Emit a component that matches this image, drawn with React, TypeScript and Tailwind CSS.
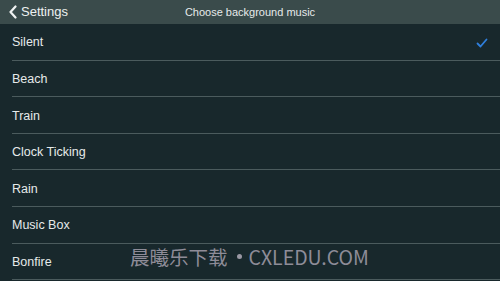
import React from "react";

const items = ["Silent", "Beach", "Train", "Clock Ticking", "Rain", "Music Box", "Bonfire"];

export default function App() {
  return (
    <div className="relative w-[500px] h-[281px] overflow-hidden bg-[#18282c] text-[#e6eaea]" style={{ fontFamily: '"Liberation Sans", Arial, sans-serif' }}>
      <div className="relative flex h-[24px] items-center bg-[#3a4b4b]">
        <div className="flex items-center pl-[8px]">
          <svg width="10" height="14" viewBox="0 0 10 14" className="mr-[3px]">
            <path d="M7.5 1.5 L2.5 7 L7.5 12.5" fill="none" stroke="#f0f2f2" strokeWidth="2.2" strokeLinecap="round" strokeLinejoin="round" />
          </svg>
          <span className="text-[13px] text-[#eef1f1]">Settings</span>
        </div>
        <div className="absolute inset-0 flex items-center justify-center text-[11px] text-[#e6eaea]">Choose background music</div>
      </div>
      <div className="flex flex-col">
        {items.map((it, i) => (
          <div key={it} className="flex h-[36.6px] items-stretch pl-[12px]">
            <div className="flex flex-1 items-center justify-between border-b border-[#4b5b5d] pr-[12px] pt-[2px]">
              <span className="text-[12.5px]">{it}</span>
              {i === 0 && (
                <svg width="12" height="10" viewBox="0 0 12 10">
                  <path d="M1.5 5.5 L4.5 8.5 L10.5 1.5" fill="none" stroke="#2f7fdc" strokeWidth="1.8" strokeLinecap="round" strokeLinejoin="round" />
                </svg>
              )}
            </div>
          </div>
        ))}
      </div>
      <div className="absolute left-[130px] top-[247px] flex items-center text-[19.5px] text-[#8e8c98] leading-none whitespace-nowrap" style={{ fontFamily: '"Noto Sans CJK SC", "Noto Sans", sans-serif' }}>
        <span>晨曦乐下载</span>
        <span className="ml-[9px] mr-[7px] inline-block h-[5px] w-[5px] rounded-full bg-[#9a98a4]" />
        <span>CXLEDU.COM</span>
      </div>
    </div>
  );
}
